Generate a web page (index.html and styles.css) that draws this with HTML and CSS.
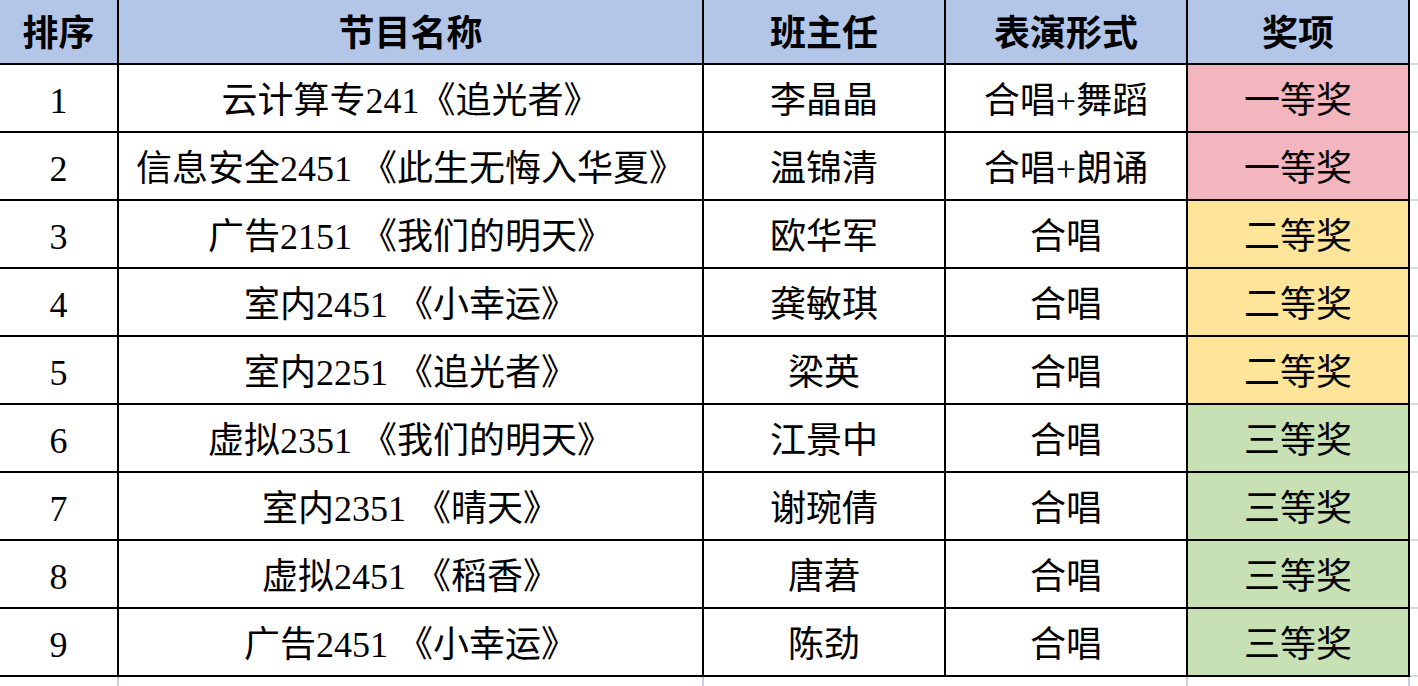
FILE: index.html
```html
<!DOCTYPE html>
<html lang="zh">
<head>
<meta charset="utf-8">
<title>节目获奖名单</title>
<link rel="stylesheet" href="styles.css">
</head>
<body>
<div class="sheet">
  <div class="table">
    <div class="cell head">排序</div>
    <div class="cell head">节目名称</div>
    <div class="cell head">班主任</div>
    <div class="cell head">表演形式</div>
    <div class="cell head">奖项</div>

    <div class="cell">1</div>
    <div class="cell">云计算专241《追光者》</div>
    <div class="cell">李晶晶</div>
    <div class="cell">合唱+舞蹈</div>
    <div class="cell first">一等奖</div>

    <div class="cell">2</div>
    <div class="cell">信息安全2451 《此生无悔入华夏》</div>
    <div class="cell">温锦清</div>
    <div class="cell">合唱+朗诵</div>
    <div class="cell first">一等奖</div>

    <div class="cell">3</div>
    <div class="cell">广告2151 《我们的明天》</div>
    <div class="cell">欧华军</div>
    <div class="cell">合唱</div>
    <div class="cell second">二等奖</div>

    <div class="cell">4</div>
    <div class="cell">室内2451 《小幸运》</div>
    <div class="cell">龚敏琪</div>
    <div class="cell">合唱</div>
    <div class="cell second">二等奖</div>

    <div class="cell">5</div>
    <div class="cell">室内2251 《追光者》</div>
    <div class="cell">梁英</div>
    <div class="cell">合唱</div>
    <div class="cell second">二等奖</div>

    <div class="cell">6</div>
    <div class="cell">虚拟2351 《我们的明天》</div>
    <div class="cell">江景中</div>
    <div class="cell">合唱</div>
    <div class="cell third">三等奖</div>

    <div class="cell">7</div>
    <div class="cell">室内2351 《晴天》</div>
    <div class="cell">谢琬倩</div>
    <div class="cell">合唱</div>
    <div class="cell third">三等奖</div>

    <div class="cell">8</div>
    <div class="cell">虚拟2451 《稻香》</div>
    <div class="cell">唐莙</div>
    <div class="cell">合唱</div>
    <div class="cell third">三等奖</div>

    <div class="cell">9</div>
    <div class="cell">广告2451 《小幸运》</div>
    <div class="cell">陈劲</div>
    <div class="cell">合唱</div>
    <div class="cell third">三等奖</div>
  </div>
</div>
</body>
</html>
```

FILE: styles.css
```css
html, body {
  margin: 0;
  padding: 0;
}

body {
  width: 1418px;
  height: 686px;
  overflow: hidden;
  background-color: #ffffff;
  /* faint spreadsheet gridlines around the table */
  background-image:
    linear-gradient(to right, transparent 117px, #c9cde0 117px, #c9cde0 119px, transparent 119px,
                    transparent 702px, #c9cde0 702px, #c9cde0 704px, transparent 704px,
                    transparent 1186px, #c9cde0 1186px, #c9cde0 1188px, transparent 1188px,
                    transparent 1408px, #c9cde0 1408px, #c9cde0 1410px, transparent 1410px),
    repeating-linear-gradient(to bottom, transparent 0, transparent 63px, #d6d9e6 63px, #d6d9e6 65px, transparent 65px, transparent 68px);
  font-family: "Liberation Serif", "Noto Sans CJK SC", serif;
  color: #000000;
}

.sheet {
  display: flex;
}

.table {
  display: grid;
  grid-template-columns: 117px 583px 240px 240px 220px;
  grid-template-rows: 63px repeat(9, 66px);
  gap: 2px;
  padding: 0 2px 2px 0;
  background-color: #000000;
}

.cell {
  display: flex;
  align-items: center;
  justify-content: center;
  background-color: #ffffff;
  font-size: 36px;
  line-height: 1;
  white-space: nowrap;
  padding-top: 5px;
  box-sizing: border-box;
}

.head {
  background-color: #b4c6e7;
  font-size: 36px;
  font-weight: 700;
  padding-top: 4px;
}

.first {
  background-color: #f3b6be;
}

.second {
  background-color: #fee59a;
}

.third {
  background-color: #c7e1b5;
}
```
